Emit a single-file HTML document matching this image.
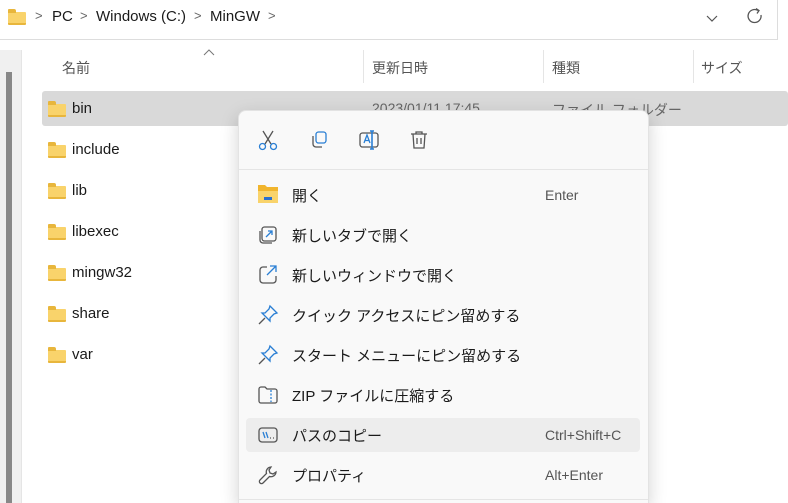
<!DOCTYPE html><html><head><meta charset="utf-8"><style>
*{margin:0;padding:0;box-sizing:border-box}
html,body{width:788px;height:503px;overflow:hidden}
body{background:#fff;font-family:"Segoe UI","Liberation Sans","Noto Sans CJK JP",sans-serif;font-size:14px;color:#1a1a1a;position:relative}
.a{position:absolute}
.crumb{top:8px;font-size:15px;color:#1a1a1a}
.chev{top:8px;color:#666;font-size:13px}
.fold{width:18px;height:13px;background:#f9d36b;border-radius:1px;border-bottom:2px solid #e8b63c}
.fold:before{content:"";position:absolute;left:0;top:-3px;width:8px;height:4px;background:#e8b63c;border-radius:1px 2px 0 0}
.hd{top:58px;color:#555;font-size:14px}
.sep{top:50px;width:1px;height:33px;background:#e5e5e5}
.row{left:72px;font-size:15px}
.menu{left:238px;top:110px;width:411px;height:393px;background:#f9f9f9;border:1px solid #e3e3e3;border-bottom:none;border-radius:8px 8px 0 0;box-shadow:0 6px 18px rgba(0,0,0,.18)}
.it{left:292px;font-size:15px;color:#1a1a1a}
.sc{left:545px;font-size:14px;color:#555}
svg{position:absolute}
</style></head><body>
<div class="a" style="left:0;top:0;width:778px;height:40px;border-bottom:1px solid #ddd;border-right:1px solid #ddd"></div>
<div class="a fold" style="left:8px;top:12px;"></div>
<div class="a chev" style="left:35px">&gt;</div>
<div class="a crumb" style="left:52px">PC</div>
<div class="a chev" style="left:80px">&gt;</div>
<div class="a crumb" style="left:96px">Windows (C:)</div>
<div class="a chev" style="left:194px">&gt;</div>
<div class="a crumb" style="left:210px">MinGW</div>
<div class="a chev" style="left:268px">&gt;</div>
<svg style="left:704px;top:10px" width="16" height="16"><path d="M3 6l5 5 5-5" fill="none" stroke="#555" stroke-width="1.2"/></svg>
<svg style="left:745px;top:6px" width="20" height="20"><path d="M16 9A6.5 6.5 0 1 1 13 4.5" fill="none" stroke="#555" stroke-width="1.3"/><path d="M11 2.5l3 2-2 3" fill="none" stroke="#555" stroke-width="1.3"/></svg>
<div class="a" style="left:0;top:50px;width:22px;height:453px;background:#f0f0f0;border-right:1px solid #e5e5e5"></div>
<div class="a" style="left:6px;top:72px;width:6px;height:431px;background:#888"></div>
<svg style="left:203px;top:48px" width="12" height="8"><path d="M1 7l5-5 5 5" fill="none" stroke="#777" stroke-width="1"/></svg>
<div class="a hd" style="left:62px">名前</div>
<div class="a sep" style="left:363px"></div><div class="a hd" style="left:372px">更新日時</div>
<div class="a sep" style="left:543px"></div><div class="a hd" style="left:552px">種類</div>
<div class="a sep" style="left:693px"></div><div class="a hd" style="left:701px">サイズ</div>
<div class="a" style="left:42px;top:91px;width:746px;height:35px;background:#d9d9d9;border-radius:3px"></div>
<div class="a" style="left:372px;top:100px;color:#666;font-size:14px">2023/01/11 17:45</div>
<div class="a" style="left:552px;top:100px;color:#666;font-size:14px">ファイル フォルダー</div>
<div class="a fold" style="left:48px;top:104px"></div><div class="a row" style="top:100px">bin</div>
<div class="a fold" style="left:48px;top:145px"></div><div class="a row" style="top:141px">include</div>
<div class="a fold" style="left:48px;top:186px"></div><div class="a row" style="top:182px">lib</div>
<div class="a fold" style="left:48px;top:227px"></div><div class="a row" style="top:223px">libexec</div>
<div class="a fold" style="left:48px;top:268px"></div><div class="a row" style="top:264px">mingw32</div>
<div class="a fold" style="left:48px;top:309px"></div><div class="a row" style="top:305px">share</div>
<div class="a fold" style="left:48px;top:350px"></div><div class="a row" style="top:346px">var</div>
<div class="a menu"></div>
<svg style="left:256px;top:128px" width="24" height="24" fill="none" stroke-width="1.3"><path d="M7 3l8 13M17 3L9 16" stroke="#555"/><circle cx="6.5" cy="18.5" r="3" stroke="#2a7fd4"/><circle cx="17.5" cy="18.5" r="3" stroke="#2a7fd4"/></svg>
<svg style="left:307px;top:128px" width="24" height="24" fill="none" stroke-width="1.3"><rect x="9" y="4" width="10" height="11" rx="2.5" stroke="#2a7fd4"/><path d="M6 8v8a3 3 0 0 0 3 3h6" stroke="#555"/></svg>
<svg style="left:357px;top:128px" width="24" height="24" fill="none" stroke-width="1.3"><rect x="3" y="5" width="18" height="14" rx="2.5" stroke="#555"/><path d="M7 15l3-8 3 8M8 12.5h4" stroke="#2a7fd4"/><path d="M15 3v18M13 3h4M13 21h4" stroke="#2a7fd4" stroke-width="1.6"/></svg>
<svg style="left:407px;top:128px" width="24" height="24" fill="none" stroke="#555" stroke-width="1.3"><path d="M4 6h16M9 6V4h6v2M6 6l1 14h10l1-14M10 10v6M14 10v6"/></svg>
<div class="a" style="left:239px;top:169px;width:409px;height:1px;background:#e5e5e5"></div>
<div class="a" style="left:246px;top:418px;width:394px;height:34px;background:#ededed;border-radius:4px"></div>
<div class="a" style="left:239px;top:499px;width:409px;height:1px;background:#e5e5e5"></div>
<svg style="left:257px;top:184px" width="22" height="20"><path d="M1 1h7l2 2h11v16H1z" fill="#f1b52d"/><rect x="1" y="7" width="20" height="12" fill="#f9d36b"/><rect x="7" y="13" width="8" height="3" fill="#2a6fcf"/></svg>
<div class="a it" style="top:185px">開く</div><div class="a sc" style="top:187px">Enter</div>
<svg style="left:257px;top:224px" width="22" height="22" fill="none" stroke-width="1.3"><rect x="5" y="3" width="14" height="14" rx="2.5" stroke="#555"/><path d="M3 7v9a3 3 0 0 0 3 3h9" stroke="#555"/><path d="M9 13l6-6M11 7h4v4" stroke="#2a7fd4"/></svg>
<div class="a it" style="top:225px">新しいタブで開く</div>
<svg style="left:257px;top:263px" width="22" height="22" fill="none" stroke-width="1.3"><path d="M10 4H6a3 3 0 0 0-3 3v10a3 3 0 0 0 3 3h10a3 3 0 0 0 3-3v-4" stroke="#555"/><path d="M10 12l9-9M13 3h6v6" stroke="#2a7fd4"/></svg>
<div class="a it" style="top:265px">新しいウィンドウで開く</div>
<svg style="left:257px;top:304px" width="22" height="22" fill="none" stroke-width="1.3"><path d="M13 2l7 7-3 1-4 4 0 3-8-8 3 0 4-4z" stroke="#2a7fd4"/><path d="M8 14l-6 6" stroke="#555"/></svg>
<div class="a it" style="top:305px">クイック アクセスにピン留めする</div>
<svg style="left:257px;top:344px" width="22" height="22" fill="none" stroke-width="1.3"><path d="M13 2l7 7-3 1-4 4 0 3-8-8 3 0 4-4z" stroke="#2a7fd4"/><path d="M8 14l-6 6" stroke="#555"/></svg>
<div class="a it" style="top:345px">スタート メニューにピン留めする</div>
<svg style="left:257px;top:384px" width="22" height="22" fill="none" stroke-width="1.3"><path d="M2 5a2 2 0 0 1 2-2h4l2 2h8a2 2 0 0 1 2 2v10a2 2 0 0 1-2 2H4a2 2 0 0 1-2-2z" stroke="#555"/><path d="M14 6v12" stroke="#2a7fd4" stroke-dasharray="2 1.5"/></svg>
<div class="a it" style="top:385px">ZIP ファイルに圧縮する</div>
<svg style="left:257px;top:424px" width="22" height="22" fill="none" stroke-width="1.3"><rect x="2" y="4" width="18" height="14" rx="3" stroke="#555"/><path d="M6 8l2 6M9 8l2 6" stroke="#2a7fd4"/><path d="M13 14h1M16 14h1" stroke="#555"/></svg>
<div class="a it" style="top:425px">パスのコピー</div><div class="a sc" style="top:427px">Ctrl+Shift+C</div>
<svg style="left:257px;top:464px" width="22" height="22" fill="none" stroke="#555" stroke-width="1.3"><path d="M14 3a5 5 0 0 0-4.5 6.5L3 16a2 2 0 0 0 3 3l6.5-6.5A5 5 0 0 0 19 8l-3 2-3-1-1-3 2-3z"/></svg>
<div class="a it" style="top:465px">プロパティ</div><div class="a sc" style="top:467px">Alt+Enter</div>
</body></html>
